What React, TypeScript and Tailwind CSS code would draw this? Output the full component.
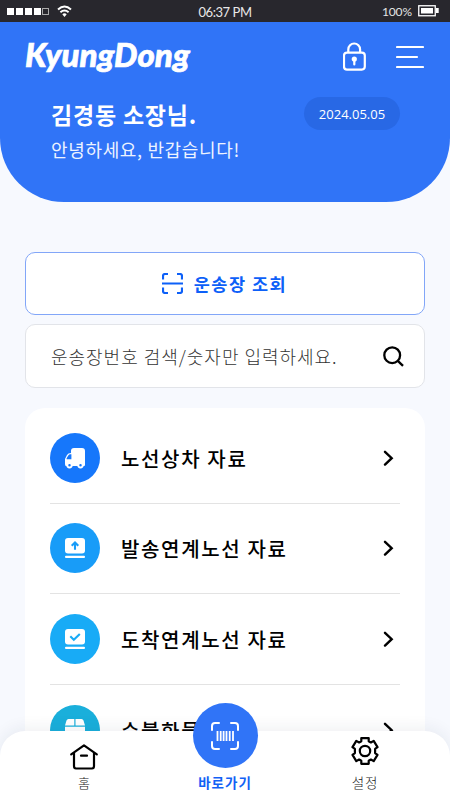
import type { ReactNode } from "react";

const KR = "font-['Noto_Sans_CJK_KR',sans-serif]";

function StatusBar() {
  return (
    <div className="grid h-[22px] shrink-0 grid-cols-3 items-center bg-[#28272d] text-white">
      <div className="flex items-center pl-[7px]">
        <svg width="66" height="16" viewBox="0 0 66 16" fill="none">
          {[0, 9, 18, 27].map((x) => (
            <rect key={x} x={x} y="5" width="7" height="7" fill="white" />
          ))}
          <rect x="35.5" y="5.5" width="6" height="6" stroke="#aaa" />
          <path d="M51 6.4Q57.5.6 64 6.4M53.4 9.2Q57.5 5.8 61.6 9.2" stroke="white" strokeWidth="2" />
          <path d="M55.3 11.2Q57.5 9.4 59.7 11.2L57.5 14Z" fill="white" />
        </svg>
      </div>
      <div className="whitespace-nowrap pt-[2px] text-center font-['Lato',sans-serif] text-[13px] leading-none tracking-[-0.45px] text-[#e8e8e8]">
        06:37 PM
      </div>
      <div className="flex items-center justify-end gap-[6px] pr-[11px] font-['Lato',sans-serif] text-[12px] leading-none tracking-[-0.1px] text-[#e4e4e4]">
        <span className="pt-[2px]">100%</span>
        <svg width="21" height="12" viewBox="0 0 21 12" fill="none">
          <rect x=".75" y=".75" width="16.5" height="10" stroke="white" strokeWidth="1.3" />
          <path d="M3 3h12v5.5H3zM18 3h2.7v5H18z" fill="white" />
        </svg>
      </div>
    </div>
  );
}

function Header() {
  return (
    <header className="h-[180px] shrink-0 rounded-b-[64px] bg-[#3074f7] text-white">
      <div className="flex h-[70px] items-center justify-between pl-[25px] pr-[26px]">
        <h1 className="mb-[5px] whitespace-nowrap font-['Lato',sans-serif] text-[33px] font-black italic leading-none tracking-[0.05px] [-webkit-text-stroke:0.7px_white]">
          KyungDong
        </h1>
        <div className="flex items-center gap-[28px]">
          <svg width="25" height="30" viewBox="0 0 25 30" fill="none" stroke="white" strokeWidth="2.2">
            <path d="M5.3 10.5V7.4a5.9 5.9 0 0 1 11.8 0v3.3" />
            <rect x="1" y="10.6" width="20.8" height="17" rx="3" />
            <circle cx="11.3" cy="17" r="2.6" fill="white" stroke="none" />
            <path d="M11.3 18v4.4" strokeLinecap="round" />
          </svg>
          <svg width="28" height="24" viewBox="0 0 28 24" stroke="white" strokeWidth="2.2" strokeLinecap="round">
            <path d="M1 2h26M1 12h20M1 22h26" />
          </svg>
        </div>
      </div>
      <div className="flex items-start justify-between pl-[51px] pr-[50px]">
        <div className={`${KR} whitespace-nowrap`}>
          <p className="mt-[5px] text-[23px] font-bold leading-[34px] tracking-[0.8px]">김경동 소장님.</p>
          <p className="mt-[5px] text-[18px] font-normal leading-[27px] tracking-[0.65px] text-[#edf3ff]">안녕하세요, 반갑습니다!</p>
        </div>
        <div className="mt-[5px] flex h-[33px] w-[96px] items-center justify-center rounded-full bg-[#2868e5] pt-[3px] font-['Open_Sans',sans-serif] text-[13px] tracking-[0px]">
          2024.05.05
        </div>
      </div>
    </header>
  );
}

function Row({ color, label, children }: { color: string; label: string; children: ReactNode }) {
  return (
    <li className="flex h-[90.6px] shrink-0 items-center border-b border-[#e3e3e3]">
      <span className={`flex size-[50px] shrink-0 items-center justify-center rounded-full ${color}`}>
        {children}
      </span>
      <span className={`${KR} ml-[21px] grow whitespace-nowrap pt-[2px] text-[20px] font-medium leading-none tracking-[1.65px] text-black`}>
        {label}
      </span>
      <svg className="mr-[6px]" width="11" height="16" viewBox="0 0 11 16" fill="none" stroke="black" strokeWidth="2.4" strokeLinecap="round">
        <path d="M2 1.8 8.7 8.2 2 14.6" />
      </svg>
    </li>
  );
}

function List() {
  return (
    <ul className="mx-[25px] mt-[20px] flex h-[420px] shrink-0 flex-col rounded-t-[20px] bg-white px-[25px] pt-[5px]">
      <Row color="bg-[#1677fb]" label="노선상차 자료">
        <svg width="22" height="22" viewBox="0 0 22 22">
          <path fill="white" d="M10 1h8q3 0 3 3v14q0 1-1 1H2q-1 0-1-2v-5l2-4q1-2 4-2V4q0-3 3-3Z" />
          <path fill="#1677fb" d="M4.3 8.5q.8-1.3 2-1.3h1.1v5H2.6v-1z" />
          <circle cx="5.5" cy="18.3" r="2.2" fill="#1677fb" stroke="white" strokeWidth="1.9" />
          <circle cx="16.5" cy="18.3" r="2.2" fill="#1677fb" stroke="white" strokeWidth="1.9" />
        </svg>
      </Row>
      <Row color="bg-[#189cf8]" label="발송연계노선 자료">
        <svg width="20" height="22" viewBox="0 0 20 22" fill="none">
          <rect y="1" width="20" height="15.5" rx="3" fill="white" />
          <rect y="18.7" width="20" height="2.4" rx="1" fill="white" />
          <path d="M10 12.8V6M6.7 8.7 10 5.5l3.3 3.2" stroke="#189cf8" strokeWidth="2.1" />
        </svg>
      </Row>
      <Row color="bg-[#18abf6]" label="도착연계노선 자료">
        <svg width="20" height="22" viewBox="0 0 20 22" fill="none">
          <rect y="1" width="20" height="15.5" rx="3" fill="white" />
          <rect y="18.7" width="20" height="2.4" rx="1" fill="white" />
          <path d="m5.3 8.3 3.5 3.4 6-5.8" stroke="#18abf6" strokeWidth="2.1" />
        </svg>
      </Row>
      <Row color="bg-[#1aafdb]" label="수불화물 자료">
        <svg width="20" height="22" viewBox="0 0 20 22">
          <path fill="white" d="M3.5 0h5.8v6.5H0l1.5-5Q2 0 3.5 0ZM10.5 0h6q1.5 0 2 1.5l1.5 5h-9.5ZM0 7.8h20V19q0 2-2 2H2q-2 0-2-2Z" />
        </svg>
      </Row>
    </ul>
  );
}

function BottomNav() {
  return (
    <nav className={`${KR} absolute inset-x-0 bottom-0 h-[69px] rounded-t-[25px] bg-white text-[13px] leading-none shadow-[0_-3px_16px_rgba(30,40,70,0.07)]`}>
      <div className="grid h-full grid-cols-[168px_114px_168px]">
        <div className="flex flex-col items-center pt-[12px] font-light text-[#222]">
          <svg width="28" height="28" viewBox="0 0 28 28" fill="none" stroke="black" strokeWidth="2.2" strokeLinecap="round" strokeLinejoin="round">
            <path d="M1.2 11.3 14 2.4l12.8 8.9M4 9.6V23q0 2.5 2 2.5h16q2 0 2-2.5V9.6M11 12.7h6" />
          </svg>
          <span className="mt-[5px]">홈</span>
        </div>
        <div className="-mt-[28px] flex flex-col items-center">
          <span className="flex size-[65px] items-center justify-center rounded-full bg-[#3074f7]">
            <svg width="28" height="28" viewBox="0 0 28 28" fill="none" stroke="white" strokeWidth="2" strokeLinecap="round">
              <path d="M1 8V4q0-3 3-3h4M20 1h4q3 0 3 3v4M1 20v4q0 3 3 3h4M20 27h4q3 0 3-3v-4" />
              <path d="M6.5 9v10M9.7 9v10M12.6 9v10M15.5 9v10M18.7 9v10M22 9v10" strokeWidth="1.8" strokeLinecap="butt" />
            </svg>
          </span>
          <span className="mt-[8px] whitespace-nowrap text-[13.5px] font-bold tracking-[1px] text-[#1261f5]">바로가기</span>
        </div>
        <div className="flex flex-col items-center pr-[2px] pt-[6px] font-light text-[#222]">
          <svg width="28" height="28" viewBox="0 0 28 28" fill="none" stroke="black" strokeWidth="2.2" strokeLinejoin="round">
            <path d="M10.3 1.2h7.4v3l2.2 1.3 2.8-1.6 3.8 6.2-2.4 1.8v4.2l2.4 1.8-3.8 6.2-2.8-1.6-2.2 1.3v3h-7.4v-3l-2.2-1.3-2.8 1.6-3.8-6.2 2.4-1.8v-4.2l-2.4-1.8 3.8-6.2 2.8 1.6 2.2-1.3Z" />
            <circle cx="14" cy="14" r="5.2" />
          </svg>
          <span className="mt-[11px] text-[13.5px] tracking-[0.8px]">설정</span>
        </div>
      </div>
    </nav>
  );
}

export default function App() {
  return (
    <div className="relative flex h-[800px] w-[450px] flex-col overflow-hidden bg-[#f7f9fe]">
      <StatusBar />
      <Header />
      <button className={`${KR} mx-[25px] mt-[50px] flex h-[63px] shrink-0 items-center justify-center gap-[11px] rounded-[10px] border border-[#82a6f8] bg-white pr-px text-[17.5px] font-bold leading-none tracking-[1.5px] text-[#0d60f8]`}>
        <svg width="21" height="21" viewBox="0 0 21 21" fill="none" stroke="#0d60f8" strokeWidth="2.2">
          <path d="M1 6.5V3q0-2 2-2h3M15 1h3q2 0 2 2v3.5M1 14.5V18q0 2 2 2h3M15 20h3q2 0 2-2v-3.5M0 10.5h21" />
        </svg>
        <span>운송장 조회</span>
      </button>
      <div className={`${KR} mx-[25px] mt-[9px] flex h-[64px] shrink-0 items-center justify-between rounded-[10px] border border-[#e2e4e9] bg-white pl-[25px] pr-[20px] text-[18px] font-light leading-none tracking-[0.98px] text-[#333]`}>
        <span className="whitespace-nowrap">운송장번호 검색/숫자만 입력하세요.</span>
        <svg width="21" height="21" viewBox="0 0 21 21" fill="none" stroke="black" strokeWidth="2.3">
          <circle cx="9.2" cy="9.2" r="7.9" />
          <path d="m14.8 14.8 5.2 5" />
        </svg>
      </div>
      <List />
      <BottomNav />
    </div>
  );
}
